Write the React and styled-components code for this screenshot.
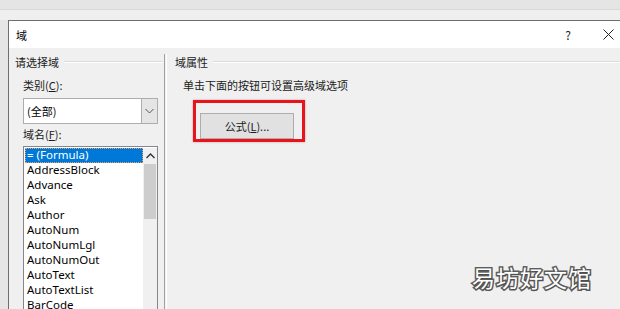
import React from "react";
import styled, { createGlobalStyle } from "styled-components";

const Global = createGlobalStyle`
  html, body { margin: 0; padding: 0; }
  body {
    width: 620px; height: 309px; overflow: hidden;
    background: #e6e6e6;
    font-family: "Noto Sans", "Noto Sans CJK SC", sans-serif;
    color: #000;
  }
`;

const Page = styled.div`
  position: relative;
  width: 620px;
  height: 309px;
  overflow: hidden;
  background: #e5e5e5;
`;

const TopStrip = styled.div`
  height: 11px;
  margin-top: 9px;
  border-top: 1px solid #d9d9d9;
  background: #efefef;
  box-sizing: border-box;
`;

const Dialog = styled.div`
  margin-left: 8px;
  border-top: 1px solid #6e6e6e;
  border-left: 1px solid #6e6e6e;
  background: #f0f0f0;
  height: 300px;
  display: flex;
  flex-direction: column;
`;

const TitleBar = styled.div`
  height: 27px;
  background: #fff;
  display: flex;
  align-items: center;
  padding-left: 7px;
  font-family: "Noto Sans CJK SC", sans-serif;
  font-size: 11px;
`;

const Title = styled.span`
  flex: 1;
`;

const TitleButton = styled.span`
  width: 20px;
  margin-left: ${(p) => p.$ml || 0}px;
  margin-right: ${(p) => p.$mr || 0}px;
  display: flex;
  justify-content: center;
  font-size: 12px;
  color: #222;
`;

const Body = styled.div`
  flex: 1;
  display: flex;
`;

const LeftPane = styled.div`
  width: 149px;
  padding: 6px 0 0 6px;
  display: flex;
  flex-direction: column;
`;

const Divider = styled.div`
  width: 1px;
  margin-top: 6px;
  border-left: 1px solid #a0a0a0;
  border-right: 1px solid #fff;
`;

const RightPane = styled.div`
  flex: 1;
  padding: 6px 0 0 8px;
  display: flex;
  flex-direction: column;
`;

const GroupHeader = styled.div`
  display: flex;
  align-items: center;
  height: 16px;
  font-family: "Noto Sans CJK SC", sans-serif;
  font-size: 11px;
  color: #1a1a1a;
  &::after {
    content: "";
    flex: 1;
    height: 1px;
    margin-left: 5px;
    margin-right: ${(p) => p.$gapRight || 0}px;
    background: #dcdcdc;
    border-bottom: 1px solid #fff;
  }
`;

const Label = styled.div`
  margin: ${(p) => p.$m};
  height: 16px;
  line-height: 16px;
  font-family: "Noto Sans CJK SC", sans-serif;
  font-size: 11px;
  color: #1a1a1a;
  white-space: nowrap;
`;

const Key = styled.span`
  text-decoration: underline;
  text-underline-offset: 1px;
`;

const Combo = styled.div`
  margin: 5px 0 0 8px;
  width: 135px;
  height: 26px;
  box-sizing: border-box;
  border: 1px solid #adadad;
  background: #fff;
  display: flex;
`;

const ComboText = styled.div`
  flex: 1;
  padding-left: 3px;
  display: flex;
  align-items: center;
  font-family: "Noto Sans CJK SC", sans-serif;
  font-size: 11px;
`;

const ComboArrow = styled.div`
  width: 15px;
  border-left: 1px solid #adadad;
  background: #e5e5e5;
  display: flex;
  align-items: center;
  justify-content: center;
`;

const ListBox = styled.div`
  margin: 4px 0 0 8px;
  width: 135px;
  flex: 1;
  box-sizing: border-box;
  border: 1px solid #828790;
  background: #fff;
  display: flex;
  padding: 1px 0 0 1px;
`;

const Items = styled.div`
  flex: 1;
  display: flex;
  flex-direction: column;
`;

const Item = styled.div`
  height: 15px;
  line-height: 14px;
  padding-left: 2px;
  font-size: 11.5px;
  white-space: nowrap;
  box-sizing: border-box;
  color: ${(p) => (p.$sel ? "#fff" : "#000")};
  background: ${(p) => (p.$sel ? "#0078d7" : "transparent")};
  outline: ${(p) => (p.$sel ? "1px dotted #f0a060" : "none")};
  outline-offset: -1px;
`;

const ScrollBar = styled.div`
  width: 14px;
  margin-top: 0;
  background: #f0f0f0;
  display: flex;
  flex-direction: column;
`;

const ScrollArrow = styled.div`
  height: 16px;
  display: flex;
  align-items: center;
  justify-content: center;
`;

const Thumb = styled.div`
  height: 55px;
  background: #cdcdcd;
  margin: 0 1px;
`;

const Hint = styled.div`
  margin: 7px 0 0 8px;
  height: 16px;
  line-height: 16px;
  font-family: "Noto Sans CJK SC", sans-serif;
  font-size: 11px;
  color: #1a1a1a;
`;

const Highlight = styled.div`
  margin: 7px 0 0 18px;
  width: 112px;
  height: 42px;
  box-sizing: border-box;
  border: 3px solid #e8141b;
  padding: 10px 0 0 4px;
  box-shadow: 0 0 2px rgba(120, 0, 0, 0.35);
`;

const Button = styled.div`
  width: 94px;
  height: 26px;
  box-sizing: border-box;
  border: 1px solid #adadad;
  background: #e1e1e1;
  display: flex;
  align-items: center;
  justify-content: center;
  font-family: "Noto Sans CJK SC", sans-serif;
  font-size: 11px;
  color: #1a1a1a;
`;

const Watermark = styled.div`
  position: absolute;
  left: 472px;
  top: 260px;
  font-family: "Noto Sans CJK SC", sans-serif;
  font-size: 23px;
  letter-spacing: 1px;
  color: #fff;
  -webkit-text-stroke: 3px #5e5e5e;
  paint-order: stroke fill;
  text-shadow: 1px 1px 1px rgba(0, 0, 0, 0.2);
`;

const items = [
  "= (Formula)",
  "AddressBlock",
  "Advance",
  "Ask",
  "Author",
  "AutoNum",
  "AutoNumLgl",
  "AutoNumOut",
  "AutoText",
  "AutoTextList",
  "BarCode",
];

export default function App() {
  return (
    <Page>
      <Global />
      <TopStrip />
      <Dialog>
        <TitleBar>
          <Title>域</Title>
          <TitleButton>?</TitleButton>
          <TitleButton $ml={20} $mr={2}>
            <svg width="11" height="11" viewBox="0 0 11 11">
              <path d="M0.5 0.5 L10.5 10.5 M10.5 0.5 L0.5 10.5" stroke="#222" strokeWidth="1" />
            </svg>
          </TitleButton>
        </TitleBar>
        <Body>
          <LeftPane>
            <GroupHeader $gapRight={1}>请选择域</GroupHeader>
            <Label $m="7px 0 0 8px">
              类别(<Key>C</Key>):
            </Label>
            <Combo>
              <ComboText>(全部)</ComboText>
              <ComboArrow>
                <svg width="9" height="6" viewBox="0 0 9 6">
                  <path d="M0.5 1 L4.5 5 L8.5 1" fill="none" stroke="#555" strokeWidth="1" />
                </svg>
              </ComboArrow>
            </Combo>
            <Label $m="2px 0 0 8px">
              域名(<Key>F</Key>):
            </Label>
            <ListBox>
              <Items>
                {items.map((t, i) => (
                  <Item key={t} $sel={i === 0}>
                    {t}
                  </Item>
                ))}
              </Items>
              <ScrollBar>
                <ScrollArrow>
                  <svg width="9" height="6" viewBox="0 0 9 6">
                    <path d="M0.5 5 L4.5 1 L8.5 5" fill="none" stroke="#333" strokeWidth="1.4" />
                  </svg>
                </ScrollArrow>
                <Thumb />
              </ScrollBar>
            </ListBox>
          </LeftPane>
          <Divider />
          <RightPane>
            <GroupHeader>域属性</GroupHeader>
            <Hint>单击下面的按钮可设置高级域选项</Hint>
            <Highlight>
              <Button>
                公式(<Key>L</Key>)...
              </Button>
            </Highlight>
          </RightPane>
        </Body>
      </Dialog>
      <Watermark>易坊好文馆</Watermark>
    </Page>
  );
}
